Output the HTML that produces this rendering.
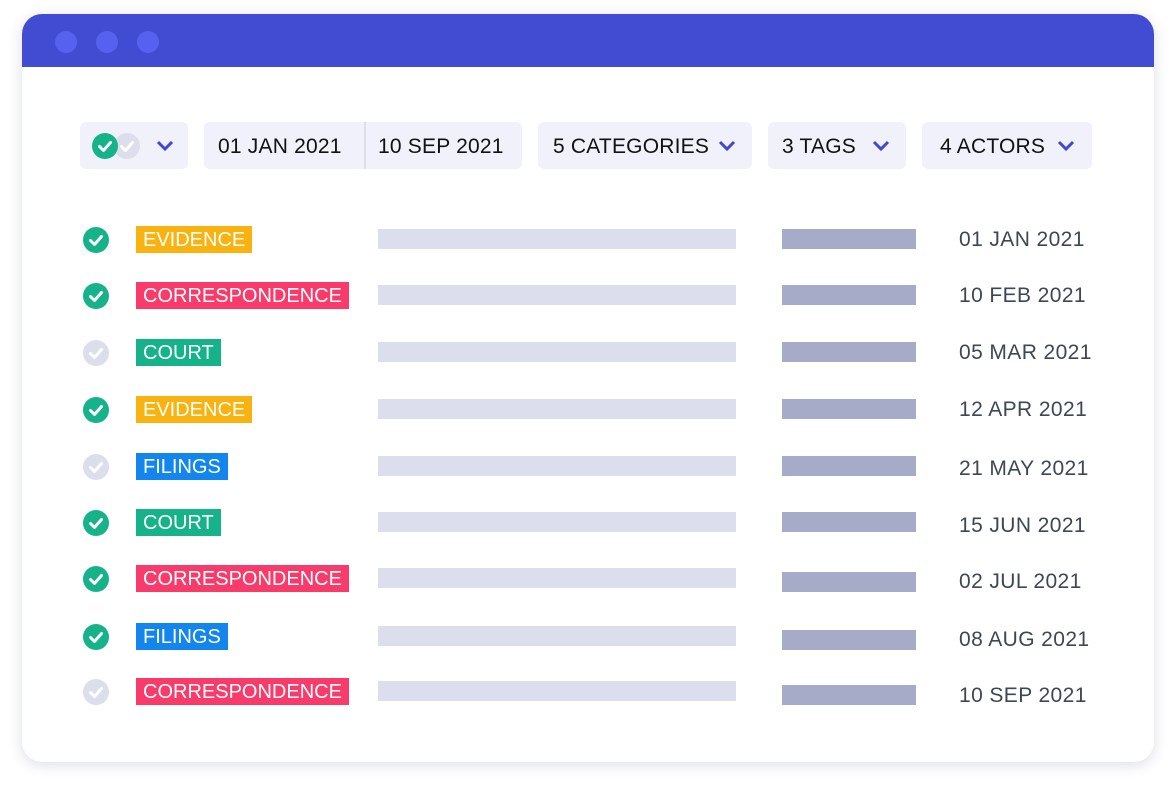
<!DOCTYPE html><html><head><style>
body{margin:0;width:1173px;height:788px;background:#fff;font-family:"Liberation Sans",Arial,sans-serif;position:relative;overflow:hidden}
.card{position:absolute;left:22px;top:14px;width:1132px;height:748px;border-radius:20px;background:#fff;box-shadow:0 3px 14px rgba(60,70,120,.18);overflow:hidden}
.hd{height:53px;background:#414cd2;position:relative}
.dot{position:absolute;top:17px;width:22px;height:22px;border-radius:50%;background:#5761ef}
.f{position:absolute;top:122px;height:47px;background:#f0f1fa;border-radius:6px;font-size:21px;color:#111;line-height:50px;letter-spacing:.2px}
.f span{position:absolute}
.chev{position:absolute;top:18px}
.r{position:absolute;left:0;width:1173px;height:30px}
.ck{position:absolute;left:83px;top:2px;width:26px;height:26px}
.tag{position:absolute;left:136px;top:1px;height:27px;line-height:29px;padding:0 7px;color:#fff;font-size:20px}
.b1{position:absolute;left:378px;top:4px;width:358px;height:20px;background:#dcdeee}
.b2{position:absolute;left:782px;top:4px;width:134px;height:20px;background:#a6acc8}
.dt{position:absolute;left:959px;top:3px;font-size:21px;color:#3f4655;letter-spacing:.4px}
.ev{background:#f8b310}.co{background:#f93b6b}.cu{background:#16b38a}.fi{background:#1286ec}
</style></head><body>
<div class="card"><div class="hd"><div class="dot" style="left:33px"></div><div class="dot" style="left:74px"></div><div class="dot" style="left:115px"></div></div></div>
<svg width="0" height="0" style="position:absolute"><defs>
<g id="g"><circle cx="13" cy="13" r="13" fill="#16b38a"/><path d="M7.5 13.5l4 4 7-8" stroke="#fff" stroke-width="3" fill="none" stroke-linecap="round" stroke-linejoin="round"/></g>
<g id="w"><circle cx="13" cy="13" r="13" fill="#dcdeec"/><path d="M7.5 13.5l4 4 7-8" stroke="#fff" stroke-width="3" fill="none" stroke-linecap="round" stroke-linejoin="round"/></g>
<path id="v" d="M2 2l7 7 7-7" stroke="#3e48d0" stroke-width="3" fill="none"/>
</defs></svg>
<div class="f" style="left:80px;width:108px"><svg style="position:absolute;left:12px;top:11px" width="60" height="26"><use href="#w" x="22"/><use href="#g" x="0"/></svg><svg class="chev" style="left:76px" width="18" height="12"><use href="#v"/></svg></div>
<div class="f" style="left:204px;width:318px"><span style="left:14px">01 JAN 2021</span><div style="position:absolute;left:160px;top:0;width:2px;height:47px;background:#dcdeec"></div><span style="left:174px">10 SEP 2021</span></div>
<div class="f" style="left:538px;width:214px"><span style="left:15px">5 CATEGORIES</span><svg class="chev" style="left:180px" width="18" height="12"><use href="#v"/></svg></div>
<div class="f" style="left:768px;width:138px"><span style="left:14px">3 TAGS</span><svg class="chev" style="left:104px" width="18" height="12"><use href="#v"/></svg></div>
<div class="f" style="left:922px;width:170px"><span style="left:18px">4 ACTORS</span><svg class="chev" style="left:135px" width="18" height="12"><use href="#v"/></svg></div>

<div class="r" style="top:225px"><svg class="ck"><use href="#g"/></svg><div class="tag ev">EVIDENCE</div><div class="b1"></div><div class="b2"></div><div class="dt">01 JAN 2021</div></div>
<div class="r" style="top:281px"><svg class="ck"><use href="#g"/></svg><div class="tag co">CORRESPONDENCE</div><div class="b1"></div><div class="b2"></div><div class="dt">10 FEB 2021</div></div>
<div class="r" style="top:338px"><svg class="ck"><use href="#w"/></svg><div class="tag cu">COURT</div><div class="b1"></div><div class="b2"></div><div class="dt">05 MAR 2021</div></div>
<div class="r" style="top:395px"><svg class="ck"><use href="#g"/></svg><div class="tag ev">EVIDENCE</div><div class="b1"></div><div class="b2"></div><div class="dt">12 APR 2021</div></div>
<div class="r" style="top:452px"><svg class="ck"><use href="#w"/></svg><div class="tag fi">FILINGS</div><div class="b1"></div><div class="b2"></div><div class="dt" style="top:5px">21 MAY 2021</div></div>
<div class="r" style="top:508px"><svg class="ck"><use href="#g"/></svg><div class="tag cu">COURT</div><div class="b1"></div><div class="b2"></div><div class="dt" style="top:6px">15 JUN 2021</div></div>
<div class="r" style="top:564px"><svg class="ck"><use href="#g"/></svg><div class="tag co">CORRESPONDENCE</div><div class="b1"></div><div class="b2" style="top:8px"></div><div class="dt" style="top:6px">02 JUL 2021</div></div>
<div class="r" style="top:622px"><svg class="ck"><use href="#g"/></svg><div class="tag fi">FILINGS</div><div class="b1"></div><div class="b2" style="top:8px"></div><div class="dt" style="top:6px">08 AUG 2021</div></div>
<div class="r" style="top:677px"><svg class="ck"><use href="#w"/></svg><div class="tag co">CORRESPONDENCE</div><div class="b1"></div><div class="b2" style="top:8px"></div><div class="dt" style="top:7px">10 SEP 2021</div></div>
</body></html>
